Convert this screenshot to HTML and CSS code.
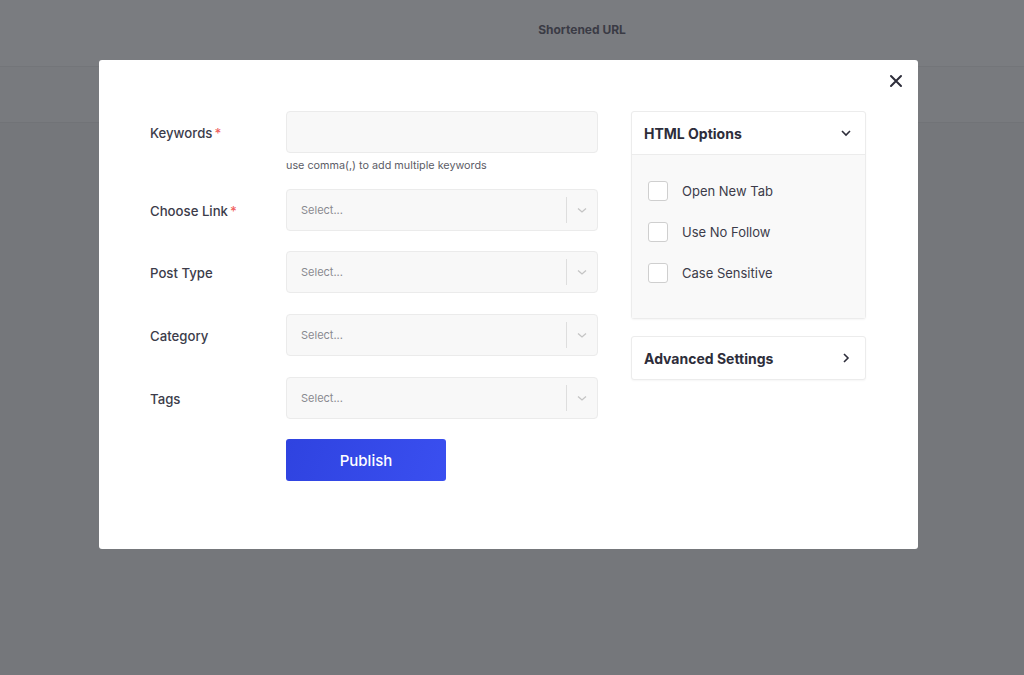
FILE: index.html
```html
<!DOCTYPE html>
<html lang="en">
<head>
    <meta charset="UTF-8">
    <meta name="viewport" content="width=device-width, initial-scale=1.0">
    <title>Add Keyword</title>
    <link rel="stylesheet" href="styles.css">
</head>
<body>
    <div class="page">
        <header class="top-bar">
            <span class="top-title">Shortened URL</span>
        </header>
        <div class="sub-bar"></div>
    </div>

    <div class="overlay">
        <div class="modal">
            <button class="close-btn" aria-label="Close">
                <svg width="14" height="14" viewBox="0 0 14 14"><path d="M2 2L12 12M12 2L2 12" stroke="#2d2d3a" stroke-width="2" stroke-linecap="round"/></svg>
            </button>

            <div class="modal-body">
                <form class="link-form">
                    <div class="form-row">
                        <label>Keywords<span class="req">*</span></label>
                        <div class="field">
                            <input type="text" class="text-input">
                            <p class="hint">use comma(,) to add multiple keywords</p>
                        </div>
                    </div>

                    <div class="form-row">
                        <label>Choose Link<span class="req">*</span></label>
                        <div class="field">
                            <div class="select-box">
                                <span class="placeholder">Select...</span>
                                <span class="divider"></span>
                                <svg class="caret" width="12" height="12" viewBox="0 0 12 12"><path d="M2 4.5L6 8L10 4.5" fill="none" stroke="#c4c4c4" stroke-width="1.3"/></svg>
                            </div>
                        </div>
                    </div>

                    <div class="form-row">
                        <label>Post Type</label>
                        <div class="field">
                            <div class="select-box">
                                <span class="placeholder">Select...</span>
                                <span class="divider"></span>
                                <svg class="caret" width="12" height="12" viewBox="0 0 12 12"><path d="M2 4.5L6 8L10 4.5" fill="none" stroke="#c4c4c4" stroke-width="1.3"/></svg>
                            </div>
                        </div>
                    </div>

                    <div class="form-row">
                        <label>Category</label>
                        <div class="field">
                            <div class="select-box">
                                <span class="placeholder">Select...</span>
                                <span class="divider"></span>
                                <svg class="caret" width="12" height="12" viewBox="0 0 12 12"><path d="M2 4.5L6 8L10 4.5" fill="none" stroke="#c4c4c4" stroke-width="1.3"/></svg>
                            </div>
                        </div>
                    </div>

                    <div class="form-row">
                        <label>Tags</label>
                        <div class="field">
                            <div class="select-box">
                                <span class="placeholder">Select...</span>
                                <span class="divider"></span>
                                <svg class="caret" width="12" height="12" viewBox="0 0 12 12"><path d="M2 4.5L6 8L10 4.5" fill="none" stroke="#c4c4c4" stroke-width="1.3"/></svg>
                            </div>
                        </div>
                    </div>

                    <div class="form-row">
                        <span></span>
                        <div class="field">
                            <button type="submit" class="publish-btn">Publish</button>
                        </div>
                    </div>
                </form>

                <aside class="side-panel">
                    <div class="panel">
                        <div class="panel-head">
                            <h3>HTML Options</h3>
                            <svg width="12" height="12" viewBox="0 0 12 12"><path d="M2 4L6 8L10 4" fill="none" stroke="#2d2d3a" stroke-width="1.6"/></svg>
                        </div>
                        <ul class="option-list">
                            <li><span class="check"></span>Open New Tab</li>
                            <li><span class="check"></span>Use No Follow</li>
                            <li><span class="check"></span>Case Sensitive</li>
                        </ul>
                    </div>

                    <div class="panel">
                        <div class="panel-head">
                            <h3>Advanced Settings</h3>
                            <svg width="12" height="12" viewBox="0 0 12 12"><path d="M4 2L8 6L4 10" fill="none" stroke="#2d2d3a" stroke-width="1.6"/></svg>
                        </div>
                    </div>
                </aside>
            </div>
        </div>
    </div>
</body>
</html>
```

FILE: styles.css
```css
* {
    box-sizing: border-box;
    margin: 0;
    padding: 0;
}

body {
    font-family: Inter, "Noto Sans", Arial, sans-serif;
    color: #3c3c4a;
    background-color: #75777b;
    height: 675px;
    overflow: hidden;
}

.top-bar {
    height: 67px;
    background-color: #7a7c80;
    display: flex;
    align-items: center;
    justify-content: center;
    padding-left: 140px;
    border-bottom: 1px solid #737579;
}

.top-title {
    font-size: 12px;
    font-weight: 700;
    color: #3a3b45;
    margin-top: -8px;
}

.sub-bar {
    height: 56px;
    background-color: #787a7e;
    border-bottom: 1px solid #717377;
}

.overlay {
    position: absolute;
    top: 0;
    left: 0;
    width: 100%;
    height: 100%;
}

.modal {
    position: absolute;
    top: 60px;
    left: 99px;
    width: 819px;
    height: 489px;
    background-color: #fff;
    border-radius: 3px;
    padding: 51px 52px 0 51px;
}

.close-btn {
    position: absolute;
    top: 14px;
    right: 15px;
    width: 14px;
    height: 14px;
    border: none;
    background: none;
    cursor: pointer;
    display: flex;
}

.modal-body {
    display: flex;
    gap: 33px;
}

.link-form {
    width: 448px;
    display: flex;
    flex-direction: column;
    gap: 20.7px;
}

.form-row {
    display: grid;
    grid-template-columns: 136px 312px;
    align-items: start;
}

.form-row label {
    font-size: 13.2px;
    font-weight: 500;
    color: #3c3c4a;
    line-height: 39px;
    padding-top: 3px;
}

.req {
    color: #f0625f;
    margin-left: 2px;
}

.text-input {
    display: block;
    width: 100%;
    height: 42px;
    border: 1px solid #ebebeb;
    border-radius: 4px;
    background-color: #f8f8f8;
    outline: none;
}

.hint {
    font-size: 10.8px;
    color: #5c5c66;
    margin-top: 6px;
    margin-bottom: -4px;
}

.select-box {
    height: 42px;
    border: 1px solid #ebebeb;
    border-radius: 4px;
    background-color: #f8f8f8;
    display: flex;
    align-items: center;
    padding-left: 14px;
}

.placeholder {
    flex: 1;
    font-size: 11px;
    color: #8a8a90;
}

.divider {
    width: 1px;
    height: 26px;
    background-color: #dedede;
}

.caret {
    margin: 0 9px;
}

.publish-btn {
    display: block;
    width: 160px;
    height: 42px;
    border: none;
    border-radius: 3px;
    background: linear-gradient(110deg, #2f43e0 0%, #3a4ff0 100%);
    color: #fff;
    font-family: inherit;
    font-size: 15px;
    font-weight: 500;
    cursor: pointer;
}

.side-panel {
    width: 235px;
    display: flex;
    flex-direction: column;
    gap: 17px;
}

.panel {
    border: 1px solid #ececec;
    border-radius: 3px;
    box-shadow: 0 1px 2px rgba(0,0,0,0.04);
    background-color: #fff;
}

.panel-head {
    height: 42px;
    display: flex;
    align-items: center;
    justify-content: space-between;
    padding: 0 13px 0 12px;
}

.panel-head h3 {
    font-size: 14px;
    font-weight: 700;
    color: #2d2d3a;
}

.option-list {
    list-style: none;
    background-color: #f9f9f9;
    border-top: 1px solid #ececec;
    padding: 26px 17px 35px 16px;
    display: flex;
    flex-direction: column;
    gap: 21px;
}

.option-list li {
    display: flex;
    align-items: center;
    gap: 14px;
    font-size: 13px;
    color: #3c3c4a;
    height: 20px;
}

.check {
    width: 20px;
    height: 20px;
    border: 1.5px solid #cfcfcf;
    border-radius: 3px;
    background-color: #fff;
}
```
